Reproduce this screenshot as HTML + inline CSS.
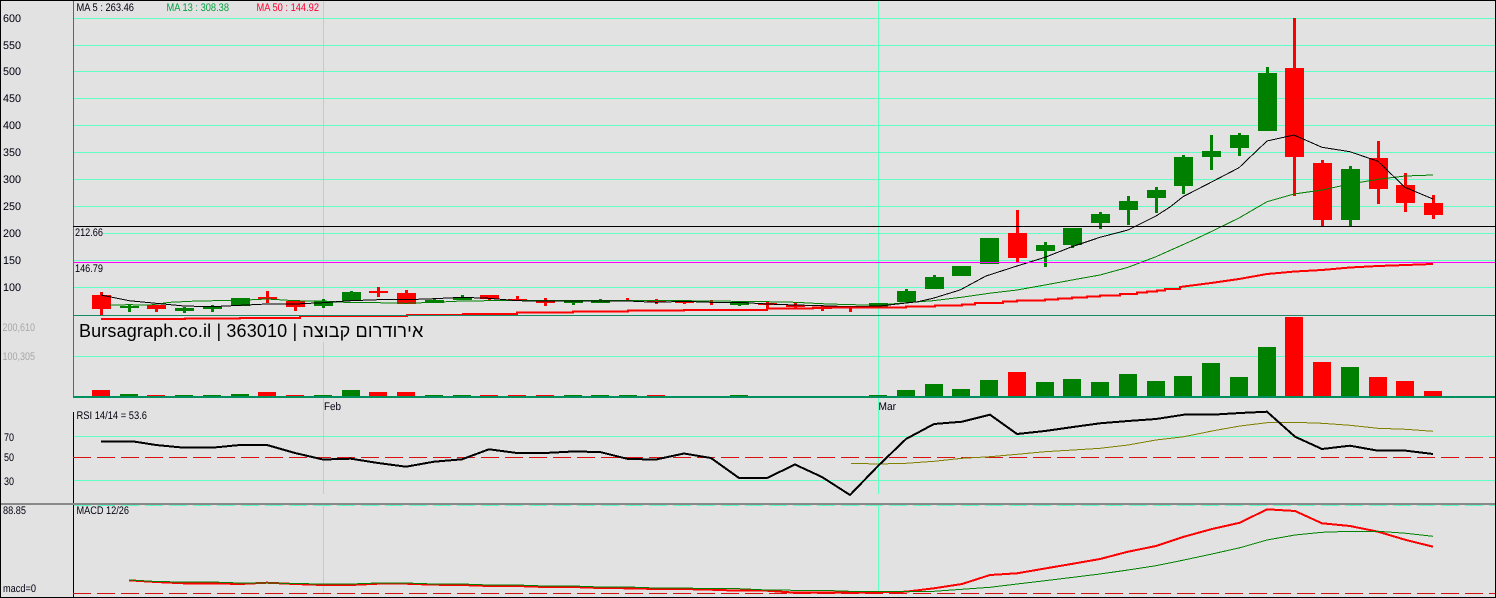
<!DOCTYPE html>
<html lang="en">
<head>
<meta charset="utf-8">
<title>Bursagraph chart</title>
<style>
html,body{margin:0;padding:0;background:#e2e2e2;}
body{width:1496px;height:598px;overflow:hidden;position:relative;}
svg{position:absolute;left:0;top:0;display:block;}
text{font-family:"Liberation Sans",sans-serif;font-size:11px;fill:#000010;}
#title{position:absolute;left:79px;top:320px;font-family:"Liberation Sans","Noto Sans CJK JP",sans-serif;font-size:18px;line-height:22px;letter-spacing:.14px;color:#000;white-space:nowrap;background:#e2e2e2;}
</style>
</head>
<body>
<svg width="1496" height="598" viewBox="0 0 1496 598" shape-rendering="crispEdges">
<rect width="1496" height="598" fill="#e2e2e2"/>
<!-- grid -->
<g fill="#60ffc4">
<rect x="73" y="18" width="1422" height="1"/>
<rect x="73" y="45" width="1422" height="1"/>
<rect x="73" y="71" width="1422" height="1"/>
<rect x="73" y="98" width="1422" height="1"/>
<rect x="73" y="125" width="1422" height="1"/>
<rect x="73" y="152" width="1422" height="1"/>
<rect x="73" y="179" width="1422" height="1"/>
<rect x="73" y="206" width="1422" height="1"/>
<rect x="73" y="233" width="1422" height="1"/>
<rect x="73" y="260" width="1422" height="1"/>
<rect x="73" y="287" width="1422" height="1"/>
<rect x="73" y="356" width="1422" height="1"/>
<rect x="73" y="436" width="1422" height="1"/>
<rect x="73" y="480" width="1422" height="1"/>
<rect x="323" y="1" width="1" height="493"/>
<rect x="878" y="1" width="1" height="493"/>
<rect x="323" y="505" width="1" height="88"/>
<rect x="878" y="505" width="1" height="88"/>
</g>
<!-- candles -->
<path fill="#008000" d="M120 306h19v2h-19zM128 304h3v8h-3zM175 308h19v3h-19zM183 307h3v6h-3zM203 306h19v3h-19zM211 305h3v7h-3zM231 298h19v8h-19zM314 301h19v5h-19zM322 299h3v9h-3zM342 292h19v9h-19zM350 291h3v2h-3zM425 300h19v3h-19zM433 299h3v2h-3zM453 297h19v3h-19zM461 295h3v3h-3zM564 300h19v3h-19zM572 303h3v2h-3zM591 301h19v2h-19zM599 299h3v3h-3zM730 302h19v3h-19zM738 305h3v1h-3zM869 303h19v4h-19zM897 291h19v11h-19zM905 289h3v3h-3zM925 277h19v12h-19zM933 275h3v3h-3zM952 266h19v10h-19zM980 238h19v26h-19zM1036 245h19v6h-19zM1044 242h3v25h-3zM1063 228h19v17h-19zM1071 245h3v3h-3zM1091 214h19v9h-19zM1099 212h3v17h-3zM1119 201h19v9h-19zM1127 196h3v29h-3zM1147 190h19v8h-19zM1155 187h3v26h-3zM1174 157h19v29h-19zM1182 155h3v39h-3zM1202 151h19v6h-19zM1210 135h3v35h-3zM1230 135h19v13h-19zM1238 133h3v23h-3zM1258 73h19v58h-19zM1266 67h3v6h-3zM1341 169h19v51h-19zM1349 166h3v61h-3z"/>
<path fill="#ff0000" d="M92 295h19v14h-19zM100 292h3v23h-3zM147 305h19v4h-19zM155 309h3v3h-3zM258 297h19v2h-19zM266 291h3v12h-3zM286 301h19v6h-19zM294 307h3v4h-3zM369 291h19v2h-19zM377 287h3v10h-3zM397 293h19v11h-19zM405 290h3v3h-3zM480 295h19v4h-19zM488 299h3v2h-3zM508 299h19v2h-19zM516 296h3v3h-3zM536 301h19v2h-19zM544 298h3v8h-3zM626 298h3v3h-3zM647 300h19v2h-19zM655 299h3v5h-3zM675 301h19v2h-19zM683 300h3v4h-3zM710 300h3v5h-3zM758 303h19v2h-19zM766 302h3v6h-3zM786 305h19v2h-19zM794 303h3v6h-3zM813 307h19v2h-19zM821 306h3v5h-3zM849 308h3v4h-3zM1008 233h19v25h-19zM1016 210h3v52h-3zM1285 68h19v89h-19zM1293 18h3v178h-3zM1313 163h19v57h-19zM1321 160h3v67h-3zM1369 158h19v31h-19zM1377 141h3v63h-3zM1396 185h19v18h-19zM1404 173h3v39h-3zM1424 203h19v12h-19zM1432 195h3v24h-3z"/>
<!-- moving averages -->
<polyline fill="none" stroke="#008000" stroke-width="1" points="110,305 129,304.7 150,305 170,302.3 197,301 240,300.3 267,299 295,300.7 323,301 351,302.7 378,302.7 406,303.3 434,302.3 462,301 489,300.7 545,300.3 600,300.3 656,300.3 711,301 767,301.7 795,302.3 822,303.7 850,304.7 880,305 906,302.7 933,300.7 961,297.3 989,293.3 1017,290 1045,285 1072,280 1100,275 1128,267.3 1156,256.7 1180,246 1195,239.3 1211,231.7 1239,218 1267,201.7 1294,194 1322,190 1350,184 1378,179.3 1405,176 1433,175"/>
<polyline fill="none" stroke="#000" stroke-width="1" points="101,295 129,300.7 156,303.3 184,306 212,306.7 240,305.3 267,304 295,304 323,302.7 351,300.7 378,299.7 406,299.7 434,298.7 462,297.3 489,298.3 517,300.7 545,301 573,301 600,301 628,301 656,302.3 684,301.3 711,302.3 739,302.3 767,304 795,305 822,305.7 850,306.7 880,306 906,303 918,301.7 933,298.3 960,290 986,276 1017,266 1045,257.3 1072,246.7 1100,237.3 1128,230 1156,216 1170,207 1183,196.7 1211,182.3 1239,167.7 1267,141 1294,135 1322,147.3 1350,151.7 1378,161.3 1405,187.3 1433,199"/>
<polyline fill="none" stroke="#ff0000" stroke-width="2" points="101,319 185,319 185,318.5 240,318.5 240,318 300,318 300,316 407,316 407,315 463,315 463,314 517,314 517,312.7 573,312.7 573,311.7 628,311.7 628,310.7 684,310.7 684,310 767,310 767,308.7 813,308.7 813,307.7 906,307.7 906,306.7 935,306.7 935,305.7 962,305.7 962,304.7 975,304.7 975,303 1003,303 1003,301.7 1017,301.7 1017,300.7 1045,300.7 1045,299.7 1058,299.7 1058,298.7 1072,298.7 1072,297.7 1087,297.7 1087,296.7 1100,296.7 1100,295.7 1120,295.7 1120,294 1137,294 1137,292.7 1147,292.7 1147,291.7 1157,291.7 1157,290.3 1165,290.3 1165,289 1180,289 1180,287 1211,283 1239,279 1267,274 1295,271.5 1322,270 1350,267.5 1378,266 1406,265 1433,264"/>
<!-- frame of price panel -->
<rect x="73" y="315" width="1422" height="1" fill="#158a64"/>
<rect x="73" y="1" width="1" height="396" fill="#158a64"/>
<!-- level lines -->
<rect x="73" y="226" width="1422" height="1" fill="#000"/>
<rect x="73" y="262" width="1422" height="1" fill="#ff00ff"/>
<rect x="74" y="228" width="29" height="10" fill="#e2e2e2"/>
<!-- volume -->
<path fill="#ff0000" d="M92 390h18v6h-18zM147 395h18v1h-18zM258 392h18v4h-18zM286 395h18v1h-18zM369 392h18v4h-18zM397 392h18v4h-18zM480 395h18v1h-18zM508 395h18v1h-18zM536 395h18v1h-18zM647 395h18v1h-18zM1008 372h18v24h-18zM1285 317h18v79h-18zM1313 362h18v34h-18zM1369 377h18v19h-18zM1396 381h18v15h-18zM1424 391h18v5h-18z"/>
<path fill="#008000" d="M120 394h18v2h-18zM175 395h18v1h-18zM203 395h18v1h-18zM231 394h18v2h-18zM314 395h18v1h-18zM342 390h18v6h-18zM425 395h18v1h-18zM453 395h18v1h-18zM564 395h18v1h-18zM591 395h18v1h-18zM619 395h18v1h-18zM730 395h18v1h-18zM869 395h18v1h-18zM897 390h18v6h-18zM925 384h18v12h-18zM952 389h18v7h-18zM980 380h18v16h-18zM1036 382h18v14h-18zM1063 379h18v17h-18zM1091 382h18v14h-18zM1119 374h18v22h-18zM1147 381h18v15h-18zM1174 376h18v20h-18zM1202 363h18v33h-18zM1230 377h18v19h-18zM1258 347h18v49h-18zM1341 367h18v29h-18z"/>
<rect x="73" y="396" width="1422" height="2" fill="#009060"/>
<!-- RSI -->
<rect x="73" y="412" width="1" height="92" fill="#000"/>
<line x1="73" y1="457.5" x2="1495" y2="457.5" stroke="#d81010" stroke-width="1" stroke-dasharray="18 6"/>
<polyline fill="none" stroke="#808000" stroke-width="1" points="851,463.3 878,464 906,463.3 934,461.3 962,458.3 990,456.7 1017,454.3 1045,451.7 1073,450 1100,448.3 1128,445 1156,440 1184,436.7 1212,431 1240,426 1267,422.7 1295,422.3 1322,423.3 1350,425.3 1378,428.3 1406,429.3 1433,431.3"/>
<polyline fill="none" stroke="#000" stroke-width="2" points="101,441.7 135,441.7 156,445 184,447.7 212,447.7 240,445 267,445 295,453 323,459.5 351,458.7 378,463 406,466.7 434,461.7 462,459.3 489,449.3 517,453 545,453 573,451.5 600,452 628,459 656,459.5 684,453.5 711,458 739,478 767,478 795,464.5 822,477 850,495 878,466 906,439 934,424 962,421.7 990,414.7 1017,434 1045,431 1073,427 1100,423.3 1128,421 1156,419 1184,414.7 1212,414.7 1240,413 1267,411.7 1295,436.7 1322,449 1350,445.7 1378,450.7 1406,450.7 1433,454"/>
<!-- divider -->
<line x1="73" y1="505.5" x2="1495" y2="505.5" stroke="#60ffc4" stroke-width="1" stroke-dasharray="18 6"/>
<rect x="1" y="503" width="1494" height="2" fill="#888"/>
<!-- MACD -->
<rect x="73" y="505" width="1" height="92" fill="#000"/>
<line x1="73" y1="593.5" x2="1495" y2="593.5" stroke="#d81010" stroke-width="1" stroke-dasharray="18 6"/>
<polyline fill="none" stroke="#ff0000" stroke-width="2" points="129,580.3 156,582 184,583.3 212,583.3 240,584 267,582.7 295,584 323,585 351,585 378,583.7 406,583.7 434,584.7 462,585 489,586 517,586 545,587 573,587 600,588 628,588.3 656,589 700,589.3 739,590.7 767,590.7 795,592.7 822,592.7 850,592.3 878,592.3 906,591.7 934,588.3 962,584 990,575 1017,573.3 1045,568.5 1073,563.7 1100,559 1128,551.7 1156,546 1184,536.7 1212,529 1240,522.7 1267,509.3 1295,511 1322,523.3 1350,526 1378,531.7 1406,540 1433,546.7"/>
<polyline fill="none" stroke="#008000" stroke-width="1" points="129,580 156,581.5 184,582 212,582 240,583 267,583 295,583.5 323,584 351,584 378,583 406,583 434,584 462,584 489,585 517,585 545,586 573,586 600,587 628,587 656,588 700,588.3 739,588.7 767,590 795,590.3 822,590.3 850,591.3 878,591.7 906,591.7 934,591.3 962,589.3 990,587.3 1017,584 1045,580.7 1073,577.3 1100,574 1128,570 1156,565.7 1184,560 1212,554 1240,547.7 1267,540 1295,535 1322,532.3 1350,531.3 1378,531.3 1406,533.3 1433,536.3"/>
<!-- outer border -->
<rect x="0" y="0" width="1496" height="1" fill="#000"/>
<rect x="0" y="0" width="1" height="598" fill="#000"/>
<rect x="1495" y="0" width="1" height="598" fill="#000"/>
<rect x="0" y="597" width="1496" height="1" fill="#000"/>
<!-- text -->
<g text-rendering="geometricPrecision">
<text x="76.5" y="11" textLength="57.5" lengthAdjust="spacingAndGlyphs">MA 5 : 263.46</text>
<text x="166.5" y="11" textLength="62.5" lengthAdjust="spacingAndGlyphs" style="fill:#00a040">MA 13 : 308.38</text>
<text x="256.5" y="11" textLength="62.5" lengthAdjust="spacingAndGlyphs" style="fill:#ff0030">MA 50 : 144.92</text>
<text x="75" y="236" textLength="28" lengthAdjust="spacingAndGlyphs">212.66</text>
<text x="75" y="272" textLength="28" lengthAdjust="spacingAndGlyphs">146.79</text>
<text x="3" y="22" textLength="18" lengthAdjust="spacingAndGlyphs">600</text>
<text x="3" y="49" textLength="18" lengthAdjust="spacingAndGlyphs">550</text>
<text x="3" y="75" textLength="18" lengthAdjust="spacingAndGlyphs">500</text>
<text x="3" y="102" textLength="18" lengthAdjust="spacingAndGlyphs">450</text>
<text x="3" y="129" textLength="18" lengthAdjust="spacingAndGlyphs">400</text>
<text x="3" y="156" textLength="18" lengthAdjust="spacingAndGlyphs">350</text>
<text x="3" y="183" textLength="18" lengthAdjust="spacingAndGlyphs">300</text>
<text x="3" y="210" textLength="18" lengthAdjust="spacingAndGlyphs">250</text>
<text x="3" y="237" textLength="18" lengthAdjust="spacingAndGlyphs">200</text>
<text x="3" y="264" textLength="18" lengthAdjust="spacingAndGlyphs">150</text>
<text x="3" y="291" textLength="18" lengthAdjust="spacingAndGlyphs">100</text>
<text x="2.5" y="331" textLength="32.5" lengthAdjust="spacingAndGlyphs" style="fill:#a8a8a8">200,610</text>
<text x="2.5" y="360" textLength="32.5" lengthAdjust="spacingAndGlyphs" style="fill:#a8a8a8">100,305</text>
<text x="324" y="410" textLength="17" lengthAdjust="spacingAndGlyphs">Feb</text>
<text x="878.5" y="410" textLength="17.5" lengthAdjust="spacingAndGlyphs">Mar</text>
<text x="76.5" y="419" textLength="70.5" lengthAdjust="spacingAndGlyphs">RSI 14/14 = 53.6</text>
<text x="4" y="441" textLength="10" lengthAdjust="spacingAndGlyphs">70</text>
<text x="4" y="461" textLength="10" lengthAdjust="spacingAndGlyphs">50</text>
<text x="4" y="485" textLength="10" lengthAdjust="spacingAndGlyphs">30</text>
<text x="3" y="514" textLength="23" lengthAdjust="spacingAndGlyphs">88.85</text>
<text x="76.5" y="514" textLength="52.5" lengthAdjust="spacingAndGlyphs">MACD 12/26</text>
<text x="3" y="592" textLength="33" lengthAdjust="spacingAndGlyphs">macd=0</text>
</g>
</svg>
<div id="title">Bursagraph.co.il | 363010 | אירודרום קבוצה</div>
</body>
</html>
